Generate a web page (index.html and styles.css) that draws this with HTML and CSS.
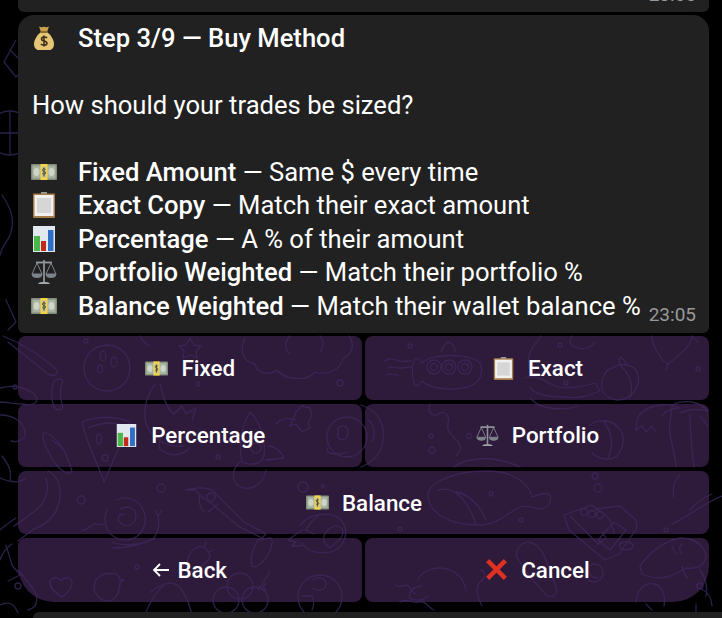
FILE: index.html
```html
<!DOCTYPE html>
<html lang="en">

<head>
    <meta charset="UTF-8">
    <meta name="viewport" content="width=device-width, initial-scale=1.0">
    <title>Step 3/9 - Buy Method</title>
    <link rel="stylesheet" href="styles.css">
</head>

<body>
    <!-- Emoji drawings, reused below -->
    <svg class="defs" width="0" height="0" aria-hidden="true">
        <symbol id="bag" viewBox="0 0 26 26">
            <path d="M8 1.500c2 1 3.500.8 5 .3 1.500.5 3 .7 5-.3l-2 5.500H10z" fill="#c9a24e" />
            <path d="M10 7h6c4 3 7 8 7 12 0 4-2.500 6-5 6H8c-2.500 0-5-2-5-6 0-4 3-9 7-12z" fill="#e6c674" />
            <rect x="9.500" y="6" width="7" height="2" fill="#8d6a2c" />
            <path d="M16 13c-1-1.500-5.500-1.500-5.500 1 0 2.700 5.500 1.300 5.500 4.200 0 2.500-5 2.500-6 .6M13 10.500v11" fill="none" stroke="#3a2c1a" stroke-width="1.500" />
        </symbol>
        <symbol id="cash" viewBox="0 0 26 26">
            <rect x="0" y="5" width="26" height="16" rx="1" fill="#7f8a78" />
            <rect x="1.500" y="6.500" width="23" height="13" fill="#a9b3a2" />
            <ellipse cx="5.500" cy="13" rx="3" ry="4" fill="#cdd5c8" />
            <ellipse cx="20.500" cy="13" rx="3" ry="4" fill="#cdd5c8" />
            <rect x="9.500" y="5" width="7" height="16" fill="#f3d448" />
            <rect x="11" y="7.500" width="4" height="11" fill="#c9c295" />
            <path d="M14.500 10.500c-.8-1-3-1-3 .6 0 1.800 3 1 3 2.900 0 1.600-2.500 1.600-3.200.4M13 8.500v9" fill="none" stroke="#4f4a2a" stroke-width="1" />
        </symbol>
        <symbol id="clipboard" viewBox="0 0 26 26">
            <rect x="10" y="0" width="6" height="3" fill="#9a9ea3" />
            <rect x="2" y="1.500" width="22" height="24.500" rx="1" fill="#a67d49" />
            <rect x="3.500" y="3" width="19" height="21" fill="#f1f1f1" />
            <rect x="6" y="6" width="14" height="15" fill="#d6d6d6" />
        </symbol>
        <symbol id="chart" viewBox="0 0 26 26">
            <rect x="2" y="0" width="22" height="26" fill="#e2e8f0" />
            <rect x="3" y="10" width="6" height="15" fill="#4cb648" />
            <rect x="10" y="15" width="5" height="10" fill="#c2291d" />
            <rect x="17" y="4" width="5.500" height="21" fill="#2f6fc6" />
        </symbol>
        <symbol id="scales" viewBox="0 0 26 26">
            <g fill="none" stroke="#7d828a" stroke-width="1">
                <path d="M6 4L1 15h10zM20 4l-5 11h10z" />
            </g>
            <path d="M.5 15h11c-.5 3-2.500 4-5.500 4s-5-1-5.500-4zM14.500 15h11c-.5 3-2.500 4-5.500 4s-5-1-5.500-4z" fill="#7d828a" />
            <path d="M5 3.500h16" stroke="#969ba2" stroke-width="1.800" />
            <path d="M13 1v22" stroke="#8d929a" stroke-width="1.800" />
            <path d="M7 25c1-2 3-2 6-2s5 0 6 2z" fill="#a3a8ae" />
        </symbol>
    </svg>

    <!-- Chat wallpaper -->
    <svg class="wallpaper" width="722" height="618" viewBox="0 0 722 618" aria-hidden="true">
        <g fill="none" stroke="#2a2048" stroke-width="1.300" stroke-linecap="round" stroke-linejoin="round">
            <!-- left margin -->
            <path d="M16 40l-12 22 12 15 2-2M10 50l8 8" />
            <circle cx="10" cy="133" r="22" />
            <path d="M-8 133h36M10 111v44" />
            <path d="M2 195c8 12 14 24 8 40-3 8-8 10-10 20M6 300l10 22-8 8" />
            <!-- top row: planet, star, cloud -->
            <path d="M3 336c20 8 38 20 52 32 6 6-2 10-8 5L8 342" />
            <circle cx="15" cy="387" r="2" />
            <circle cx="107" cy="368" r="23" />
            <ellipse cx="103" cy="356" rx="3" ry="5" />
            <ellipse cx="114" cy="362" rx="3" ry="5" />
            <ellipse cx="100" cy="369" rx="2.500" ry="4" />
            <circle cx="86" cy="341" r="2" />
            <path d="M190 338l4 7 7 1-5 5 1 7-7-3-7 3 1-7-5-5 7-1z" />
            <path d="M140 336c2 4 6 8 10 10" />
            <path d="M245 338c-6 12-2 24 10 26 2 10 14 12 22 6 8 10 30 12 38 2 12 4 26-2 28-14 10-4 12-14 6-22" />
            <path d="M290 336c-6 6-6 12 0 18M320 336c4 4 4 10 0 16" />
            <circle cx="340" cy="383" r="3" />
            <!-- candy, moon -->
            <path d="M54 381c6-4 10-2 8 3-2 3-2 14 0 20 2 6-4 8-8 3-3-8-3-18 0-26z" />
            <path d="M155 384c-10 14-14 32-6 46 8 12 22 18 34 16M160 384c4 14 6 24 14 30l8-8 4 8 10-6-4 12" />
            <circle cx="198" cy="384" r="2" />
            <!-- middle left: hat, fish, pizza -->
            <path d="M0 388c14-4 28 0 36 8 4 8-6 10-14 8-8 0-16-2-22-2" />
            <path d="M0 415c12 0 24 6 25 18 0 6-6 10-14 8M2 456c6 8 10 14 8 24M0 478c10 4 18 6 26 0" />
            <path d="M44 432c12 4 22 18 27 36 2 4 0 6-4 5-6-2-14-10-18-20-4-8-8-16-5-21z" />
            <path d="M52 440l10 8" />
            <path d="M82 422c14-6 34-6 48 0l-26 60c-6-18-18-40-22-60zM88 428c14-6 28-6 38-2" />
            <ellipse cx="99" cy="439" rx="2.500" ry="5" />
            <circle cx="105" cy="458" r="3" />
            <!-- rocket, astronaut, planet -->
            <path d="M250 412c10 10 16 26 14 44-2 8-14 10-22 6-4-16 0-38 8-50zM268 446c6 0 14 6 16 12l-18 2" />
            <circle cx="256" cy="448" r="5" />
            <path d="M240 462c-10 8-8 24 4 26 10 2 20-6 22-18M276 424c6-6 14-6 20-4" />
            <path d="M296 412l6-6 8 2 2 8-4 6 2 6-8 4-6-8-6 2z" />
            <circle cx="347" cy="437" r="20" />
            <path d="M338 428c4-4 10-2 10 4s-6 10-10 6zM328 448c-4 6 8 8 20 4" />
            <circle cx="218" cy="457" r="2" />
            <path d="M165 430c-4 6-6 12-6 18 8 8 22 10 30 0" />
            <!-- submarine, peach, mascot -->
            <path d="M385 361c4-3 10-2 14 0 4 2 8-1 12 0M388 368c4-2 8 0 12 0 4 1 8-2 12-1M386 375c4-2 8 0 12 0" />
            <path d="M415 359c4-2 6 2 7 4 8-10 50-10 58 0 4 10 0 20-12 24-18 4-38 2-46-6-1 2-4 6-7 4-3-6-4-20 0-26z" />
            <circle cx="434" cy="367" r="7" />
            <circle cx="449" cy="367" r="7" />
            <circle cx="465" cy="367" r="7" />
            <circle cx="434" cy="367" r="3.500" />
            <circle cx="449" cy="367" r="3.500" />
            <circle cx="465" cy="367" r="3.500" />
            <path d="M441 352c2-6 6-10 8-10 4 2 6 6 6 10" />
            <circle cx="410" cy="346" r="2" />
            <path d="M531 372c-4-6-4-18 4-28 8-8 4-6 6-8M572 336c-4 6-2 10 6 12 6 2 14 0 16-6" />
            <path d="M525 378c10-4 18 2 30 8 10 4 30 0 40-3l5 8c-10 4-20 8-34 6-14 0-32-2-36-10" />
            <path d="M530 398c8 10 30 14 48 8" />
            <circle cx="560" cy="345" r="2" />
            <circle cx="566" cy="383" r="2" />
            <path d="M613 368c8-6 20-4 24 4 6 14-6 28-20 28-14-2-18-12-14-22 2-6 6-10 10-10z" />
            <path d="M622 367c-2-2-4-6-2-10 4 2 6 4 6 8M622 367c8 8 12 20 8 32" />
            <path d="M652 336c0 10 10 26 16 28 10-8 22-16 24-28M668 364l-2 6M692 336l6 6" />
            <circle cx="698" cy="369" r="2" />
            <!-- second row right: globe, squiggle, shell, palm -->
            <path d="M361 405c18 6 24 20 22 36-2 14-12 22-22 26" />
            <path d="M368 420c6 4 8 14 4 22" />
            <circle cx="469" cy="436" r="2.500" />
            <circle cx="431" cy="436" r="2" />
            <path d="M430 404c-4 8 4 14 8 10 6-4 12 0 10 10-2 8 6 12 10 18 6 8 0 10-2 14" />
            <circle cx="432" cy="450" r="3" />
            <path d="M590 425c8-6 20-6 28 2 8 8 6 22-2 30-8 4-18 2-24-4M604 422c8 10 10 24 4 36" />
            <path d="M640 414c10-10 30-12 40-6-6 0-14 2-18 8M672 405c12-6 28-4 36 6 -8-2-20-2-28 2M672 405c0 8-4 20-2 30 2 10 6 24 6 32M690 415c0 14 2 36 4 52" />
            <path d="M640 414c-4 6-4 12-4 16l6-4 4 6 6-6 4 6M700 416l8 10" />
            <path d="M520 467c-20-10-50-12-66 0" />
            <!-- third row: banana, snail, ice cream -->
            <path d="M48 471c8 4 12 12 12 22 0 18-10 30-26 36l-16 12M46 478c2 8 2 18-4 26-6 8-20 16-28 22" />
            <path d="M0 530c4-4 10-8 16-12M12 544c-6 4-10 10-12 16" />
            <circle cx="81" cy="500" r="4" />
            <path d="M107 510c-6 14 2 28 16 30 14 2 24-12 22-24-2-14-16-22-28-16M120 510c6-6 16-2 16 6s-8 12-14 8-4-10 2-10" />
            <path d="M82 530c6 0 8-4 12-6 4-1 6 2 10 0" />
            <path d="M112 542c10 4 30 4 42-4 4-6 6-14 4-22M158 516l-3-6M158 516l4-6" />
            <path d="M113 548c14 0 32-4 42-10" />
            <circle cx="161" cy="488" r="4" />
            <path d="M186 490c8-2 18-4 26 0l32 32 22 12-4 4-24-12-28-24c-8-4-12-8-14-12z" />
            <path d="M200 494c-2 6 0 14 4 18M218 504l-10 8" />
            <circle cx="211" cy="497" r="4" />
            <path d="M258 540l12-2c4 0 2 10-4 20-6 8-12 10-14 8-2-6 0-16 6-26z" />
            <path d="M300 525c10-12 30-14 40-6 10 10 6 26-6 32-12 4-26 2-32-8M318 516c-6 4-10 10-12 14l8 4M328 530c8-8 18-2 14 6-4 6-10 10-12 12-6-4-10-10-2-18z" />
            <path d="M302 530l-14 10 8 2-4 4 10 0" />
            <circle cx="303" cy="487" r="5" />
            <circle cx="323" cy="486" r="1.500" />
            <!-- whale, box of coins -->
            <path d="M428 495c0-10 20-24 60-24 26 0 42 14 44 26 6-2 14-6 18-2 2 6-2 14-10 14-8-2-14-4-20-2-14 6-20 18-42 18-28 0-50-12-50-30z" />
            <path d="M438 490c14-4 28 6 38 34M456 492c12 2 22 10 30 28" />
            <circle cx="491" cy="494" r="2" />
            <circle cx="400" cy="529" r="2" />
            <circle cx="521" cy="520" r="2" />
            <path d="M564 515l28-10 4 4 24-3 16 14 1 8-18 26-14 6-36-30z" />
            <path d="M570 516l28 28 8-6-4-6M596 509c10 4 16 12 18 24M598 540l16-18 12 8-16 20z" />
            <circle cx="584" cy="512" r="3.500" />
            <circle cx="592" cy="514" r="3.500" />
            <circle cx="600" cy="515" r="3.500" />
            <circle cx="598" cy="488" r="4" />
            <circle cx="595" cy="476" r="3" />
            <ellipse cx="626" cy="546" rx="7" ry="4" />
            <circle cx="666" cy="530" r="2" />
            <path d="M680 475c-6 6-8 14-6 22M690 510c6-8 14-12 22-16M672 524c14-6 30-20 50-28" />
            <!-- bottom row: heart, chick, seal, popsicle, platypus -->
            <path d="M62 597c-6-4-13-9-12-15 1-5 8-6 11-1 3-5 11-4 11 2 0 6-5 10-10 14z" />
            <path d="M18 570c8 10 16 18 18 24 2 8 0 14-8 16M6 545l6 20 8 10-12 6M0 605c8-4 14-2 18 8" />
            <circle cx="18" cy="586" r="3" />
            <path d="M110 574c6-2 10 2 10 6l4 0-4 3c0 8-4 18-12 18-8 0-14-8-14-14s4-10 8-12c2-2 4-2 8-1z" />
            <circle cx="137" cy="567" r="2" />
            <path d="M196 548c6-4 14 2 14 10-4 6-14 12-20 14-6-6-2-20 6-24zM204 548l2-6M208 552l6-2" />
            <path d="M145 614c6-14 12-24 20-30 12-4 20 4 28 34M165 584c-6 2-10 4-14 8" />
            <circle cx="240" cy="586" r="13" />
            <circle cx="226" cy="600" r="13" />
            <circle cx="255" cy="600" r="13" />
            <path d="M258 590l12-18M266 584c-4 0-2 6 0 6" />
            <circle cx="320" cy="597" r="22" />
            <path d="M312 580c6-4 14-2 14 4s-8 8-14 4M302 596h10c2 4 2 10 0 14" />
            <path d="M396 585c4 4 8-2 12 1 4 2 2 6 8 8M418 580c2-6 10-12 22-12 14 0 24 10 26 22M422 586c-8 0-14 6-12 12 6 4 14 2 18-2" />
            <path d="M480 570c8 2 4 10 0 12-6 8-2 16 2 24M400 602c8-4 14 2 20 0 6-2 8 6 14 8" />
            <path d="M516 555c2-12 12-16 20-10 8 6 12 20 20 42 2 8-4 12-10 8-6-8-22-22-30-40z" />
            <circle cx="594" cy="573" r="9" />
            <path d="M588 570c2 6 6 8 10 8" />
            <path d="M640 566c10-14 22-24 40-28 14 0 22 6 26 16 0 10-8 16-20 14-12 8-26 14-44 6z" />
            <path d="M672 546l4 8M682 544c-4 4-2 8 0 10M682 566c2 6 2 10 6 12" />
            <path d="M636 602c0-10 8-20 18-18 8 2 12 10 10 22M646 604l6 6M700 570c6 8 8 20 6 26M700 588c8 4 12 10 12 18M696 604l0 8" />
            <circle cx="700" cy="586" r="3" />
        </g>
    </svg>

    <div class="chat">
        <div class="bubble bubble-prev">
            <span class="time">23:05</span>
        </div>

        <div class="bubble">
            <div class="line"><svg class="emoji"><use href="#bag" /></svg><strong>Step 3/9 — Buy Method</strong></div>
            <div class="line"></div>
            <div class="line">How should your trades be sized?</div>
            <div class="line"></div>
            <div class="line"><svg class="emoji"><use href="#cash" /></svg><span><strong>Fixed Amount</strong> — Same $ every time</span></div>
            <div class="line"><svg class="emoji"><use href="#clipboard" /></svg><span><strong>Exact Copy</strong> — Match their exact amount</span></div>
            <div class="line"><svg class="emoji"><use href="#chart" /></svg><span><strong>Percentage</strong> — A % of their amount</span></div>
            <div class="line"><svg class="emoji"><use href="#scales" /></svg><span><strong>Portfolio Weighted</strong> — Match their portfolio %</span></div>
            <div class="line"><svg class="emoji"><use href="#cash" /></svg><span><strong>Balance Weighted</strong> — Match their wallet balance %</span><span class="time">23:05</span></div>
        </div>

        <div class="keyboard">
            <div class="key"><svg class="key-emoji"><use href="#cash" /></svg>Fixed</div>
            <div class="key"><svg class="key-emoji"><use href="#clipboard" /></svg>Exact</div>
            <div class="key"><svg class="key-emoji"><use href="#chart" /></svg>Percentage</div>
            <div class="key"><svg class="key-emoji"><use href="#scales" /></svg>Portfolio</div>
            <div class="key key-wide"><svg class="key-emoji"><use href="#cash" /></svg>Balance</div>
            <div class="key key-left">
                <svg class="key-arrow" viewBox="0 0 17 14"><path d="M17 7H2M8 1L2 7l6 6" fill="none" stroke="#ffffff" stroke-width="1.800" /></svg>Back
            </div>
            <div class="key key-right">
                <svg class="key-emoji" viewBox="0 0 26 26"><path d="M3 3l20 20M23 3L3 23" stroke="#dd3222" stroke-width="5" /></svg>Cancel
            </div>
        </div>

        <div class="input-bar"></div>
    </div>
</body>

</html>
```

FILE: styles.css
```css
/* General Styles */
html,
body {
    height: 100%;
}

body {
    margin: 0;
    background-color: #000000;
    color: #ffffff;
    font-family: 'Roboto', sans-serif;
    overflow: hidden;
}

.defs {
    display: block;
    height: 0;
}

.wallpaper {
    position: absolute;
    top: 0;
    left: 0;
}

.chat {
    position: relative;
    display: flex;
    flex-direction: column;
    height: 618px;
    padding-left: 18px;
    box-sizing: border-box;
}

/* Message bubbles */
.bubble {
    width: 691px;
    box-sizing: border-box;
    padding: 6px 13px 10px 14px;
    background-color: #212121;
    border-radius: 16px 16px 6px 6px;
    font-size: 25.600px;
}

.bubble-prev {
    display: flex;
    justify-content: flex-end;
    align-items: flex-end;
    height: 12px;
    padding: 0 13px 9px 0;
    margin-bottom: 3px;
    border-radius: 0 0 6px 6px;
}

.line {
    display: flex;
    align-items: center;
    height: 33.500px;
    white-space: nowrap;
}

.line strong {
    font-weight: 500;
}

.emoji {
    flex: none;
    width: 26px;
    height: 26px;
    margin-left: -1px;
    margin-right: 21px;
}

.time {
    font-size: 19px;
    color: #999999;
    line-height: 17px;
}

.line .time {
    margin-left: auto;
    align-self: flex-end;
}

/* Inline keyboard */
.keyboard {
    display: grid;
    grid-template-columns: 343.500px 344px;
    grid-auto-rows: 63.500px;
    column-gap: 3.500px;
    row-gap: 3.800px;
    width: 691px;
    margin-top: 3.800px;
}

.key {
    display: flex;
    align-items: center;
    justify-content: center;
    gap: 13px;
    background-color: rgba(70, 40, 90, 0.65);
    border-radius: 8px;
    font-size: 22.400px;
    font-weight: 500;
}

.key-wide {
    grid-column: span 2;
}

.key-left {
    gap: 8px;
    border-bottom-left-radius: 36px;
}

.key-right {
    border-bottom-right-radius: 36px;
}

.key-emoji {
    flex: none;
    width: 23px;
    height: 23px;
    margin-left: 1px;
}

.key-arrow {
    flex: none;
    width: 17px;
    height: 14px;
}

.input-bar {
    height: 40px;
    margin: 10px 0 0 15px;
    background-color: #212121;
    border-radius: 20px 0 0 0;
    width: 100%;
}
```
